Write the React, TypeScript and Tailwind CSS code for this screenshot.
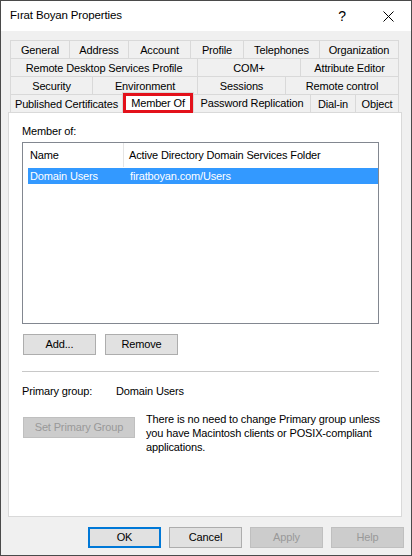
import React from "react";

type Tab = { label: string; w: string };

const rows: Tab[][] = [
  [
    { label: "General", w: "w-[59px]" },
    { label: "Address", w: "w-[59px]" },
    { label: "Account", w: "w-[62px]" },
    { label: "Profile", w: "w-[53px]" },
    { label: "Telephones", w: "w-[76px]" },
    { label: "Organization", w: "w-[80px]" },
  ],
  [
    { label: "Remote Desktop Services Profile", w: "w-[187px]" },
    { label: "COM+", w: "w-[103px]" },
    { label: "Attribute Editor", w: "w-[99px]" },
  ],
  [
    { label: "Security", w: "w-[82px]" },
    { label: "Environment", w: "w-[105px]" },
    { label: "Sessions", w: "w-[88px]" },
    { label: "Remote control", w: "w-[114px]" },
  ],
];

function TabCell({ tab, last }: { tab: Tab; last: boolean }) {
  return (
    <div
      className={`${tab.w} h-[18px] shrink-0 flex items-center justify-center border-t border-l border-[#d9d9d9] leading-[18px] whitespace-nowrap ${
        last ? "border-r" : ""
      }`}
    >
      {tab.label}
    </div>
  );
}

function Button({
  children,
  w,
  disabled,
  focused,
}: {
  children: React.ReactNode;
  w: string;
  disabled?: boolean;
  focused?: boolean;
}) {
  return (
    <div
      className={`${w} h-[21px] shrink-0 flex items-center justify-center ${
        disabled
          ? "bg-[#cccccc] border border-[#bfbfbf] text-[#999999]"
          : focused
          ? "bg-[#e1e1e1] border-2 border-[#0078d7]"
          : "bg-[#e1e1e1] border border-[#adadad]"
      }`}
    >
      {children}
    </div>
  );
}

export default function App() {
  return (
    <div
      className="w-[412px] h-[556px] bg-[#f0f0f0] border border-[#4a4a4a] flex flex-col text-[11px] tracking-[-0.15px] text-black overflow-hidden"
      style={{ fontFamily: "'Liberation Sans', Arial, sans-serif" }}
    >
      {/* Title bar */}
      <div className="h-[30px] bg-white flex items-center shrink-0 text-[11.5px]">
        <div className="pl-[9px] flex-1">Fırat Boyan Properties</div>
        <div className="w-[46px] flex justify-center text-[14px]">?</div>
        <div className="w-[46px] flex justify-center items-center">
          <svg width="11" height="11" viewBox="0 0 11 11">
            <path d="M0.5 0.5 L10.5 10.5 M10.5 0.5 L0.5 10.5" stroke="#000" strokeWidth="1" />
          </svg>
        </div>
      </div>

      {/* Tabs */}
      <div className="mt-[9px] ml-[9px] flex flex-col">
        {rows.map((row, i) => (
          <div key={i} className="flex">
            {row.map((t, j) => (
              <TabCell key={t.label} tab={t} last={j === row.length - 1} />
            ))}
          </div>
        ))}
        <div className="flex items-end h-[18px]">
          <TabCell tab={{ label: "Published Certificates", w: "w-[112px]" }} last={false} />
          <div className="relative z-10 w-[72px] h-[21px] -mb-px shrink-0 flex items-center justify-center bg-white border-t border-l border-r border-[#d9d9d9] whitespace-nowrap pt-[1px]">
            Member Of
            <div className="absolute left-0 top-0 w-[70px] h-[20px] border-[3px] border-[#e3111b]" />
          </div>
          <div className="w-[116px] h-[18px] shrink-0 flex items-center justify-center border-t border-[#d9d9d9] whitespace-nowrap">
            Password Replication
          </div>
          <TabCell tab={{ label: "Dial-in", w: "w-[45px]" }} last={false} />
          <TabCell tab={{ label: "Object", w: "w-[44px]" }} last={true} />
        </div>
      </div>

      {/* Panel */}
      <div className="ml-[7px] w-[394px] h-[405px] bg-white border border-[#d9d9d9] shrink-0 pl-[13px] flex flex-col">
        <div className="mt-[11px] h-[15px] leading-[15px]">Member of:</div>
        <div className="mt-[3px] w-[357px] h-[182px] border border-[#828790] flex flex-col">
          <div className="h-[24px] flex items-center">
            <div className="w-[101px] h-full pl-[7px] flex items-center border-r border-[#e5e5e5]">Name</div>
            <div className="pl-[5px]">Active Directory Domain Services Folder</div>
          </div>
          <div className="mt-[1px] ml-[5px] h-[16px] bg-[#3399ff] text-white flex items-center">
            <div className="w-[102px] pl-[2px]">Domain Users</div>
            <div>firatboyan.com/Users</div>
          </div>
        </div>

        <div className="mt-[10px] ml-[1px] flex gap-[9px]">
          <Button w="w-[73px]">Add...</Button>
          <Button w="w-[73px]">Remove</Button>
        </div>

        <div className="mt-[16px] w-[357px] h-px bg-[#c8c8c8]" />

        <div className="mt-[12px] h-[15px] leading-[15px] flex">
          <div className="w-[94px]">Primary group:</div>
          <div>Domain Users</div>
        </div>

        <div className="mt-[13px] ml-[1px] flex items-start">
          <div className="mt-[5px]">
            <Button w="w-[112px]" disabled>
              Set Primary Group
            </Button>
          </div>
          <p className="ml-[11px] w-[246px] leading-[14px]">
            There is no need to change Primary group unless you have Macintosh clients or POSIX-compliant
            applications.
          </p>
        </div>
      </div>

      {/* Bottom buttons */}
      <div className="mt-[10px] pr-[7px] flex justify-end gap-[8px]">
        <Button w="w-[73px]" focused>
          OK
        </Button>
        <Button w="w-[73px]">Cancel</Button>
        <Button w="w-[73px]" disabled>
          Apply
        </Button>
        <Button w="w-[73px]" disabled>
          Help
        </Button>
      </div>
    </div>
  );
}
